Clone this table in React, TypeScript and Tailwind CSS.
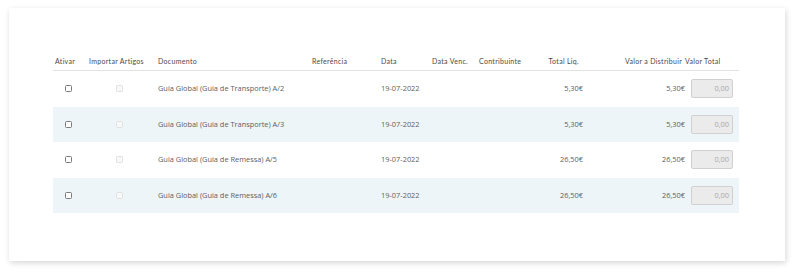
const rows = [
  { doc: "Guia Global (Guia de Transporte) A/2", data: "19-07-2022", liq: "5,30€", dist: "5,30€" },
  { doc: "Guia Global (Guia de Transporte) A/3", data: "19-07-2022", liq: "5,30€", dist: "5,30€" },
  { doc: "Guia Global (Guia de Remessa) A/5", data: "19-07-2022", liq: "26,50€", dist: "26,50€" },
  { doc: "Guia Global (Guia de Remessa) A/6", data: "19-07-2022", liq: "26,50€", dist: "26,50€" },
];

const cols = "grid grid-cols-[33px_69px_155px_68px_51px_47px_64px_43px_104px_52px] items-center";

function Checkbox({ disabled }: { disabled?: boolean }) {
  return (
    <span
      className={`block w-[7px] h-[7px] rounded-[1.5px] border ${
        disabled ? "border-[#e0e0e0] bg-[#f8f8f8]" : "border-[#7a7a7a] bg-white"
      }`}
    />
  );
}

export default function App() {
  return (
    <div className="w-[800px] h-[276px] bg-white pt-[8px] pl-[9px] antialiased">
      <div className="w-[776px] h-[253px] bg-white shadow-[1px_2px_6px_rgba(0,0,0,0.16)] pt-[44px] pl-[44px]">
        <div className="w-[686px] text-[7px] font-['Lato',sans-serif]">
          <div className={`${cols} h-[19px] border-b border-[#e2e2e2] text-[#4a4a4a] tracking-[0.3px]`}>
            <div className="pl-[2px]">Ativar</div>
            <div className="pl-[3px]">Importar Artigos</div>
            <div className="pl-[3px]">Documento</div>
            <div className="pl-[2px]">Referência</div>
            <div className="pl-[3px]">Data</div>
            <div className="pl-[3px]">Data Venc.</div>
            <div className="pl-[3px]">Contribuinte</div>
            <div className="text-right pr-[4px]">Total Liq.</div>
            <div className="text-right pr-[5px]">Valor a Distribuir</div>
            <div className="-ml-[2px]">Valor Total</div>
          </div>
          {rows.map((r, i) => (
            <div
              key={i}
              className={`${cols} h-[35.5px] text-[7.4px] text-[#606060] font-['Open_Sans',sans-serif] ${
                i % 2 === 1 ? "bg-[#edf5f8]" : "bg-white"
              }`}
            >
              <div className="pl-[12px]"><Checkbox /></div>
              <div className="pl-[30px]"><Checkbox disabled /></div>
              <div className="pl-[3px]">{r.doc}</div>
              <div />
              <div className="pl-[3px]">{r.data}</div>
              <div />
              <div />
              <div className="text-right">{r.liq}</div>
              <div className="text-right pr-[2px]">{r.dist}</div>
              <div className="pl-[4px]">
                <div className="w-[42px] h-[19px] rounded-[2px] border border-[#d0d0d0] bg-[#ebebeb] text-right pr-[3px] leading-[17px] text-[#a8a8a8]">
                  0,00
                </div>
              </div>
            </div>
          ))}
        </div>
      </div>
    </div>
  );
}
